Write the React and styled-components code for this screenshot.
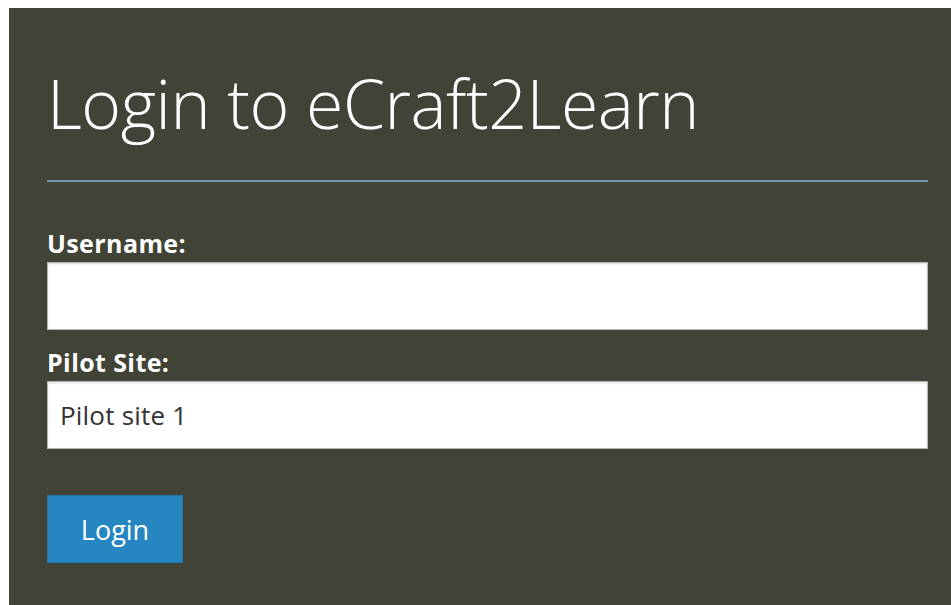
import React, { useState } from 'react'
import styled, { createGlobalStyle } from 'styled-components'

const GlobalStyle = createGlobalStyle`
  html, body {
    margin: 0;
    padding: 0;
    background: #ffffff;
  }
  body {
    font-family: "Open Sans", "Noto Sans", sans-serif;
  }
`

const Page = styled.div`
  padding: 8px 0 0 9px;
  height: 605px;
  box-sizing: border-box;
  overflow: hidden;
`

const Panel = styled.div`
  background: #404335;
  height: 100%;
  padding: 51px 23px 0 38px;
  box-sizing: border-box;
`

const Title = styled.h1`
  margin: 0;
  color: #ffffff;
  font-family: "Open Sans", sans-serif;
  font-weight: 300;
  font-size: 68px;
  line-height: 88px;
  letter-spacing: -0.5px;
`

const Rule = styled.hr`
  margin: 33px 0 0;
  border: none;
  height: 2px;
  background: #6f9aba;
`

const Form = styled.form`
  display: flex;
  flex-direction: column;
  margin-top: 42px;
`

const Label = styled.label`
  color: #ffffff;
  font-weight: 700;
  font-size: 25px;
  line-height: 38px;
  letter-spacing: 0.4px;
`

const Input = styled.input`
  height: 68px;
  box-sizing: border-box;
  border: 1px solid #b8b8b0;
  box-shadow: inset 0 1px 2px rgba(0, 0, 0, 0.15);
  background: #ffffff;
  padding: 0 12px;
  font-family: "Open Sans", sans-serif;
  font-size: 26px;
  letter-spacing: 0.2px;
  color: #333333;
  outline: none;
  margin-bottom: ${p => p.$gap || 0}px;
`

const Button = styled.button`
  align-self: flex-start;
  width: 136px;
  height: 68px;
  background: #2586c2;
  border: 1px solid #1f78ae;
  color: #ffffff;
  font-family: "Open Sans", sans-serif;
  font-size: 27px;
  cursor: pointer;
`

export default function App() {
  const [username, setUsername] = useState('')
  const [site, setSite] = useState('Pilot site 1')

  return (
    <>
      <GlobalStyle />
      <Page>
        <Panel>
          <Title>Login to eCraft2Learn</Title>
          <Rule />
          <Form onSubmit={e => e.preventDefault()}>
            <Label htmlFor="username">Username:</Label>
            <Input id="username" value={username} onChange={e => setUsername(e.target.value)} $gap={13} />
            <Label htmlFor="site">Pilot Site:</Label>
            <Input id="site" value={site} onChange={e => setSite(e.target.value)} $gap={46} />
            <Button type="submit">Login</Button>
          </Form>
        </Panel>
      </Page>
    </>
  )
}
